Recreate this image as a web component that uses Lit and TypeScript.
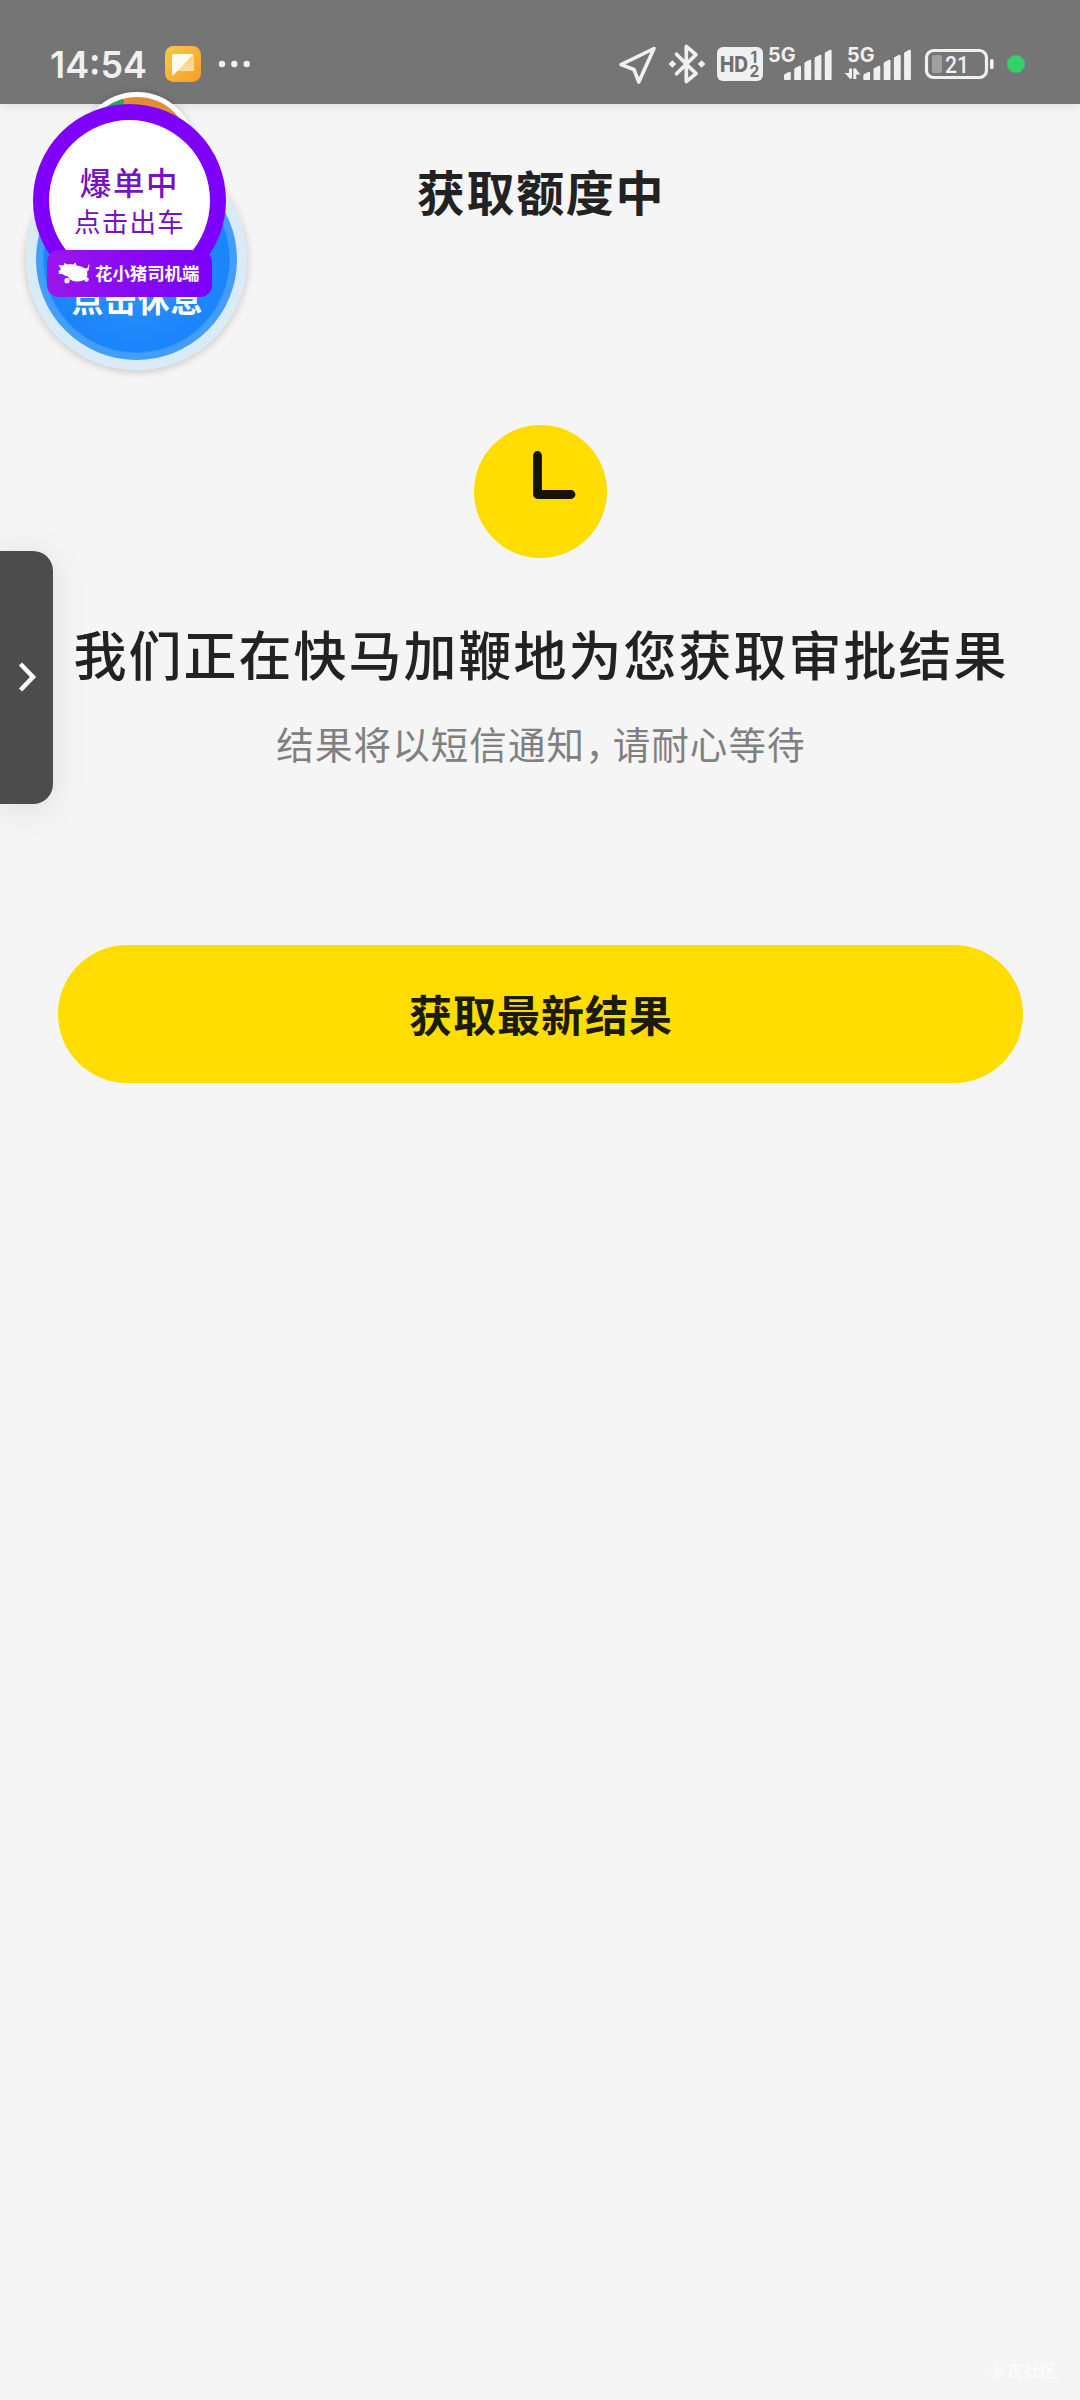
import { LitElement, html, css, svg } from "lit";
import { customElement, property } from "lit/decorators.js";

const signalBars = (x: number) => {
  const tops = [72, 66, 60, 55, 50];
  return tops.map((t, i) => {
    const l = x + i * 10.2;
    return svg`<path d="M${l} 79.2V${t + 3.4}Q${l} ${t + 2.4} ${l + 1} ${t + 2}L${l + 5.2} ${t - 0.2}Q${l + 6.8} ${t - 0.6} ${l + 6.8} ${t + 1}V79.2Q${l + 6.8} 80 ${l + 6} 80H${l + 0.8}Q${l} 80 ${l} 79.2Z" fill="#f0f0f0"/>`;
  });
};

@customElement("status-bar")
class StatusBar extends LitElement {
  @property() time = "14:54";
  @property() battery = "21";

  static styles = css`
    :host { display: block; height: 104px; background: #757575; box-shadow: 0 2px 8px rgba(0, 0, 0, 0.09); }
    svg { display: block; }
    .time { font: 600 37px Inter, "Liberation Sans", sans-serif; fill: #f0f0f0; }
    .net { font: 700 19.5px Inter, sans-serif; fill: #f0f0f0; }
    .hd { font: 800 21px Inter, sans-serif; fill: #707070; }
    .sim { font: 700 15.5px Inter, sans-serif; fill: #707070; }
    .level { font: 500 24px Roboto, sans-serif; fill: #f0f0f0; }
  `;

  render() {
    return html`
      <svg width="1080" height="104" viewBox="0 0 1080 104">
        <defs>
          <linearGradient id="app" x1="0" y1="0" x2="1" y2="1">
            <stop offset="0" stop-color="#f6cb4a" /><stop offset="1" stop-color="#fb9a27" />
          </linearGradient>
          <linearGradient id="fold" x1="0" y1="0" x2="0" y2="1">
            <stop offset="0" stop-color="#fdcf85" /><stop offset="1" stop-color="#fddca0" />
          </linearGradient>
        </defs>
        <text class="time" x="50" y="78" textLength="97" lengthAdjust="spacingAndGlyphs">${this.time}</text>
        <rect x="165" y="46" width="36" height="36" rx="8.5" fill="url(#app)" />
        <path d="M194 55V71H176Z" fill="url(#fold)" />
        <path d="M173.500 54H194L173 75.500Q172 75.500 172 74V55.500Q172 54 173.500 54Z" fill="#fffbec" />
        <g fill="#f0f0f0"><circle cx="222" cy="64" r="3.200" /><circle cx="234.300" cy="64" r="3.200" /><circle cx="246.700" cy="64" r="3.200" /></g>
        <path d="M654 48.500L621 64.600L634 69.500L638.800 82Z" fill="none" stroke="#f0f0f0" stroke-width="3.600" stroke-linejoin="round" />
        <path d="M676.500 54.300L696 73.600L686.300 81.600V46.400L696 54.600L676.500 73.800" fill="none" stroke="#f0f0f0" stroke-width="3.700" stroke-linecap="round" stroke-linejoin="round" />
        <path d="M672.300 60.200L676.200 64L672.300 67.800L668.500 64ZM701.600 60.200L705.400 64L701.600 67.800L697.800 64Z" fill="#f0f0f0" />
        <rect x="717" y="47" width="46" height="34" rx="6" fill="#f0f0f0" />
        <text class="hd" x="720" y="71.500" textLength="28" lengthAdjust="spacingAndGlyphs">HD</text>
        <text class="sim" x="750.500" y="62.500">1</text>
        <text class="sim" x="749.500" y="77">2</text>
        <text class="net" x="768" y="62" textLength="27.500" lengthAdjust="spacingAndGlyphs">5G</text>
        ${signalBars(784)}
        <text class="net" x="847" y="62" textLength="27.500" lengthAdjust="spacingAndGlyphs">5G</text>
        <path d="M850.500 68.500V78.500M854.800 79V68.500" fill="none" stroke="#f0f0f0" stroke-width="3" />
        <path d="M844.500 73H850.500V79ZM860.500 74.500H854.800V68Z" fill="#f0f0f0" />
        ${signalBars(863.3)}
        <rect x="926.500" y="50.500" width="60" height="27" rx="7" fill="none" stroke="#f0f0f0" stroke-width="3.200" />
        <rect x="932" y="55" width="10" height="18" rx="2" fill="#a0a0a0" />
        <rect x="990" y="59" width="3.600" height="10" rx="1.500" fill="#f0f0f0" />
        <text class="level" x="945" y="72.700" textLength="24" lengthAdjust="spacingAndGlyphs">${this.battery}</text>
        <circle cx="1016" cy="64" r="9" fill="#37d067" />
      </svg>
    `;
  }
}

@customElement("driver-bubbles")
class DriverBubbles extends LitElement {
  static styles = css`
    :host { display: block; width: 270px; height: 300px; position: relative; }
    .avatar, .rest, .dispatch, .brand { position: absolute; box-sizing: border-box; }
    .avatar { left: 79px; top: 12px; width: 116px; height: 116px; border-radius: 50%; border: 5.500px solid #fff; background: linear-gradient(90deg, #2ca56b 37%, #df8d37 38%); box-shadow: 0 1px 8px rgba(0, 0, 0, 0.2); }
    .rest { left: 26px; top: 69px; width: 221px; height: 221px; border-radius: 50%; border: 10px solid #d9ebf7; background: radial-gradient(circle closest-side, #3594f6 0, #1a84fd 92px, #439efb 94px); box-shadow: 0 2px 8px rgba(0, 0, 0, 0.2); display: flex; justify-content: center; align-items: flex-start; padding: 123px 0 0 2px; color: #fff; font-size: 32px; line-height: 32px; font-weight: 700; letter-spacing: 1px; }
    .dispatch { left: 33px; top: 24px; width: 193px; height: 193px; border-radius: 50%; border: 16px solid #8000fd; background: #fff; color: #7412c4; display: flex; flex-direction: column; align-items: center; padding-top: 43px; white-space: nowrap; }
    .status { font-size: 31.500px; line-height: 36px; font-weight: 500; letter-spacing: 1.700px; }
    .action { font-size: 26.500px; line-height: 30px; font-weight: 400; letter-spacing: 1.300px; margin-top: 7px; }
    .brand { left: 47px; top: 170px; width: 165px; height: 47px; border-radius: 12px; background: linear-gradient(90deg, #9b16ec, #8408f6 60%, #7c00fc); color: #fff; display: flex; align-items: center; gap: 5px; padding: 0 0 2px 11px; font-size: 17.400px; font-weight: 700; white-space: nowrap; }
  `;

  render() {
    return html`
      <div class="avatar"></div>
      <div class="rest">点击休息</div>
      <div class="dispatch">
        <span class="status">爆单中</span>
        <span class="action">点击出车</span>
      </div>
      <div class="brand">
        <svg width="32" height="22" viewBox="0 0 32 22" fill="#fff">
          <path d="M0.500 3L5.500 3.500L6.500 1L9.500 2.500Q12 1.500 15 2.500L17.500 0.500L18.500 3.500Q24 4 27 6.500L29.500 6L30.500 2.500L31.500 3L30.500 8.500L29 9.500Q30 13 28.500 16Q24 20 18 19.500Q12 19 10 14.500Q7 14 4.500 12H1L0.500 9L3 7.500Z" />
          <circle cx="9" cy="18.700" r="2.600" /><circle cx="28.500" cy="17.500" r="2.300" />
        </svg>
        <span>花小猪司机端</span>
      </div>
    `;
  }
}

@customElement("app-root")
class AppRoot extends LitElement {
  static styles = css`
    :host { display: block; position: relative; width: 1080px; height: 2400px; overflow: hidden; background: #f5f5f5; color: #222; font-family: "Noto Sans CJK SC", sans-serif; }
    .page { display: flex; flex-direction: column; align-items: center; }
    .title { margin: 48px 0 0; font-size: 48px; line-height: 76px; font-weight: 700; letter-spacing: 1.700px; padding-left: 2px; }
    .clock { display: block; margin-top: 197px; }
    .headline { margin: 55px 0 0; font-size: 53px; line-height: 80px; font-weight: 500; letter-spacing: 2px; padding-left: 2px; white-space: nowrap; }
    .hint { margin: 22px 0 0; font-size: 37.500px; line-height: 56px; color: #808080; letter-spacing: 1.100px; white-space: nowrap; display: flex; padding-left: 2px; }
    .comma { width: 27.500px; font-feature-settings: "halt" 1; }
    .refresh { margin-top: 174px; width: 965px; height: 138px; border: 0; border-radius: 69px; background: #ffdd00; color: #1c1a08; font: 700 43px/64px "Noto Sans CJK SC", sans-serif; letter-spacing: 1px; padding: 0 0 2px 2px; }
    .bubbles { position: absolute; left: 0; top: 80px; }
    .drawer { position: absolute; left: 0; top: 551px; width: 53px; height: 253px; border-radius: 0 20px 20px 0; background: #4c4c4c; box-shadow: 0 4px 34px rgba(0, 0, 0, 0.1); display: flex; align-items: center; justify-content: center; }
    .chevron { margin-bottom: 2px; }
    .mark { position: absolute; right: 22px; bottom: 17px; font-size: 17.500px; line-height: 26px; color: #fdfdfd; }
  `;

  render() {
    return html`
      <status-bar time="14:54" battery="21"></status-bar>
      <main class="page">
        <h1 class="title">获取额度中</h1>
        <svg class="clock" width="133" height="133" viewBox="0 0 133 133">
          <circle cx="66.500" cy="66.500" r="66.500" fill="#ffdd00" />
          <path d="M63.500 30.500V69.500H97" fill="none" stroke="#161306" stroke-width="8.800" stroke-linecap="round" stroke-linejoin="round" />
        </svg>
        <h2 class="headline">我们正在快马加鞭地为您获取审批结果</h2>
        <p class="hint"><span>结果将以短信通知</span><span class="comma">，</span><span>请耐心等待</span></p>
        <button class="refresh">获取最新结果</button>
      </main>
      <div class="drawer">
        <svg class="chevron" width="20" height="32" viewBox="0 0 20 32"><path d="M3.500 3L16 16L3.500 29" fill="none" stroke="#fff" stroke-width="4.500" /></svg>
      </div>
      <driver-bubbles class="bubbles"></driver-bubbles>
      <div class="mark">卡农社区</div>
    `;
  }
}
